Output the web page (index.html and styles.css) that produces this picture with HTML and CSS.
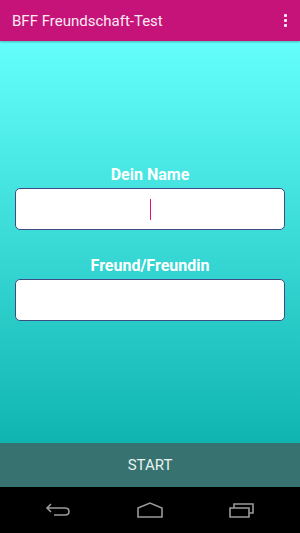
FILE: index.html
```html
<!DOCTYPE html>
<html lang="de">
<head>
    <meta charset="UTF-8">
    <meta name="viewport" content="width=device-width, initial-scale=1.0">
    <title>BFF Freundschaft-Test</title>
    <link rel="stylesheet" href="styles.css">
</head>
<body>
    <div class="app">
        <div class="toolbar">
            <span class="title">BFF Freundschaft-Test</span>
            <span class="menu"><i></i><i></i><i></i></span>
        </div>
        <div class="content">
            <div class="field">
                <label class="label">Dein Name</label>
                <div class="input"><span class="cursor"></span></div>
            </div>
            <div class="field">
                <label class="label">Freund/Freundin</label>
                <div class="input"></div>
            </div>
        </div>
        <button class="start">START</button>
        <div class="navbar">
            <svg width="26" height="16" viewBox="0 0 26 16">
                <path d="M6 2 L2 6 L6 10 M2 6 H20 Q24 6 24 9.5 Q24 13 20 13 H9" fill="none" stroke="#9a9a9a" stroke-width="1.6"/>
            </svg>
            <svg width="28" height="16" viewBox="0 0 28 16">
                <path d="M2 6 L14 1 L26 6 V15 H2 Z" fill="none" stroke="#9a9a9a" stroke-width="1.6"/>
            </svg>
            <svg width="26" height="16" viewBox="0 0 26 16">
                <path d="M1 6 H20 V15 H1 Z M5 6 V2 H24 V11 H20" fill="none" stroke="#9a9a9a" stroke-width="1.6"/>
            </svg>
        </div>
    </div>
</body>
</html>
```

FILE: styles.css
```css
body {
    margin: 0;
    font-family: Roboto, "Liberation Sans", sans-serif;
}
.app {
    width: 300px;
    height: 533px;
    display: flex;
    flex-direction: column;
}
.toolbar {
    height: 41px;
    background: #c5137a;
    display: flex;
    align-items: center;
    justify-content: space-between;
    padding: 0 12px;
    box-sizing: border-box;
    box-shadow: 0 1px 2px rgba(0, 0, 0, 0.3);
    position: relative;
}
.title {
    color: #fbeaf3;
    font-size: 15px;
}
.menu {
    display: flex;
    flex-direction: column;
    gap: 2px;
    padding-right: 1px;
}
.menu i {
    width: 3px;
    height: 3px;
    background: #fbeaf3;
    border-radius: 1px;
}
.content {
    flex: 1;
    background: linear-gradient(#64fffd, #0fb4b0);
    padding: 124px 15px 0;
    display: flex;
    flex-direction: column;
    gap: 26px;
}
.field {
    display: flex;
    flex-direction: column;
    align-items: center;
}
.label {
    color: #ffffff;
    font-weight: bold;
    font-size: 16px;
    line-height: 19px;
    margin-bottom: 4px;
}
.input {
    width: 100%;
    height: 42px;
    box-sizing: border-box;
    background: #ffffff;
    border: 1px solid #3d4c82;
    border-radius: 5px;
    display: flex;
    align-items: center;
    justify-content: center;
}
.cursor {
    width: 1px;
    height: 21px;
    background: #e0156f;
}
.start {
    height: 44px;
    border: none;
    background: #377270;
    color: #e9f2f1;
    font-family: Roboto, "Liberation Sans", sans-serif;
    font-size: 15px;
    padding: 0;
}
.navbar {
    height: 46px;
    background: #000000;
    display: flex;
    align-items: center;
    justify-content: space-between;
    padding: 0 45px;
}
```
